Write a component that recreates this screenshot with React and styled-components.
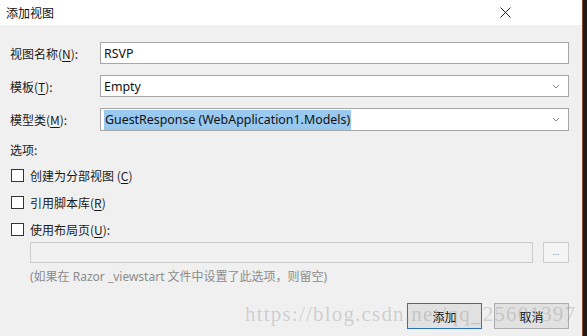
import React from "react";
import styled, { createGlobalStyle } from "styled-components";

const Global = createGlobalStyle`
  html, body { margin: 0; padding: 0; width: 587px; height: 336px; overflow: hidden; background: #1e1916; }
  #root { width: 587px; height: 336px; }
  * { box-sizing: border-box; }
`;

const Screen = styled.div`
  position: relative;
  display: flex;
  width: 587px;
  height: 336px;
`;

const Dialog = styled.div`
  width: 582px;
  height: 336px;
  display: flex;
  flex-direction: column;
  background: #f0f0f0;
  font-family: "Noto Sans", "Noto Sans CJK SC", sans-serif;
  font-size: 12px;
  color: #1a1a1a;
  overflow: hidden;
`;

const Edge = styled.div`
  width: 5px;
  height: 336px;
  border-left: 1px solid #8a4a1c;
  background: #1f1a17;
`;

const TitleBar = styled.div`
  flex-shrink: 0;
  height: 25px;
  background: #ffffff;
  display: flex;
  align-items: center;
  justify-content: space-between;
  padding: 0 71px 1px 6px;
`;

const Title = styled.span`
  font-family: "Noto Sans CJK SC", sans-serif;
  font-size: 12px;
  color: #111;
`;

const Body = styled.div`
  flex: 1;
  display: flex;
  flex-direction: column;
  padding: 17px 13px 0 10px;
`;

const Form = styled.div`
  display: grid;
  grid-template-columns: 90px 1fr;
  row-gap: 11px;
  align-items: center;
`;

const Label = styled.span`
  font-family: "Noto Sans CJK SC", sans-serif;
  font-size: 12px;
  color: #1a1a1a;
  u { text-decoration: underline; text-underline-offset: 2px; }
`;

const Field = styled.div`
  height: ${(p) => (p.$tall ? 23 : 22)}px;
  background: #fff;
  border: 1px solid #a6a6a6;
  display: flex;
  align-items: center;
  padding: 0 3px;
  font-family: "Noto Sans", "Noto Sans CJK SC", sans-serif;
  font-size: 12.4px;
  color: #111;
`;

const Value = styled.span`
  flex: 1;
  white-space: nowrap;
`;

const Selected = styled.span`
  background: #99c9ef;
  padding: 1px 1px 2px 1px;
`;

const Chevron = styled.svg`
  width: 8px;
  height: 5px;
  margin-right: 5px;
`;

const SectionTitle = styled.div`
  margin-top: 12px;
  height: 14px;
  line-height: 14px;
  font-family: "Noto Sans CJK SC", sans-serif;
  font-size: 12px;
`;

const Options = styled.div`
  display: flex;
  flex-direction: column;
  gap: 13px;
  margin-top: 11px;
  padding-left: 1px;
`;

const Option = styled.div`
  display: flex;
  align-items: center;
  gap: 6px;
  height: 14px;
  font-family: "Noto Sans CJK SC", sans-serif;
  font-size: 12px;
  u { text-decoration: underline; text-underline-offset: 2px; }
`;

const Box = styled.span`
  width: 13px;
  height: 13px;
  border: 1px solid #333;
  background: #fff;
`;

const PathRow = styled.div`
  display: flex;
  gap: 10px;
  margin-top: 6px;
  padding-left: 20px;
`;

const PathInput = styled.div`
  width: 503px;
  height: 21px;
  border: 1px solid #cccccc;
  background: #f0f0f0;
`;

const BrowseButton = styled.div`
  width: 26px;
  height: 21px;
  border: 1px solid #cccccc;
  background: #f4f4f4;
  color: #888;
  font-size: 9px;
  display: flex;
  align-items: center;
  justify-content: center;
  padding-bottom: 2px;
`;

const Hint = styled.div`
  margin-top: 6px;
  padding-left: 20px;
  color: #8c8c8c;
  font-family: "Noto Sans", "Noto Sans CJK SC", sans-serif;
  font-size: 12px;
  height: 16px;
  line-height: 16px;
`;

const Buttons = styled.div`
  display: flex;
  justify-content: flex-end;
  gap: 12px;
  margin-top: 18px;
`;

const Button = styled.div`
  width: 75px;
  height: 26px;
  background: #e1e1e1;
  border: 1px solid ${(p) => (p.$primary ? "#2a72c0" : "#adadad")};
  display: flex;
  align-items: center;
  justify-content: center;
  font-family: "Noto Sans CJK SC", sans-serif;
  font-size: 12px;
  color: #111;
`;

const Watermark = styled.div`
  position: absolute;
  left: 245px;
  top: 302px;
  font-family: "Liberation Serif", serif;
  font-size: 21px;
  letter-spacing: 1.2px;
  color: rgba(150, 150, 150, 0.38);
  white-space: nowrap;
  pointer-events: none;
`;

const ChevronIcon = () => (
  <Chevron viewBox="0 0 8 5">
    <path d="M1 1 L4 4 L7 1" fill="none" stroke="#888" strokeWidth="1" />
  </Chevron>
);

const CloseIcon = () => (
  <svg width="11" height="11" viewBox="0 0 11 11">
    <path d="M0.5 0.5 L10.5 10.5 M10.5 0.5 L0.5 10.5" stroke="#222" strokeWidth="1" fill="none" />
  </svg>
);

export default function App() {
  return (
    <>
      <Global />
      <Screen>
        <Dialog>
          <TitleBar>
            <Title>添加视图</Title>
            <CloseIcon />
          </TitleBar>
          <Body>
            <Form>
              <Label>视图名称(<u>N</u>):</Label>
              <Field>
                <Value>RSVP</Value>
              </Field>
              <Label>模板(<u>T</u>):</Label>
              <Field>
                <Value>Empty</Value>
                <ChevronIcon />
              </Field>
              <Label>模型类(<u>M</u>):</Label>
              <Field $tall>
                <Value>
                  <Selected>GuestResponse (WebApplication1.Models)</Selected>
                </Value>
                <ChevronIcon />
              </Field>
            </Form>
            <SectionTitle>选项:</SectionTitle>
            <Options>
              <Option>
                <Box />
                <span>创建为分部视图 (<u>C</u>)</span>
              </Option>
              <Option>
                <Box />
                <span>引用脚本库(<u>R</u>)</span>
              </Option>
              <Option>
                <Box />
                <span>使用布局页(<u>U</u>):</span>
              </Option>
            </Options>
            <PathRow>
              <PathInput />
              <BrowseButton>...</BrowseButton>
            </PathRow>
            <Hint>(如果在 Razor _viewstart 文件中设置了此选项，则留空)</Hint>
            <Buttons>
              <Button $primary>添加</Button>
              <Button>取消</Button>
            </Buttons>
          </Body>
        </Dialog>
        <Edge />
        <Watermark>https://blog.csdn.net/qq_25601397</Watermark>
      </Screen>
    </>
  );
}
